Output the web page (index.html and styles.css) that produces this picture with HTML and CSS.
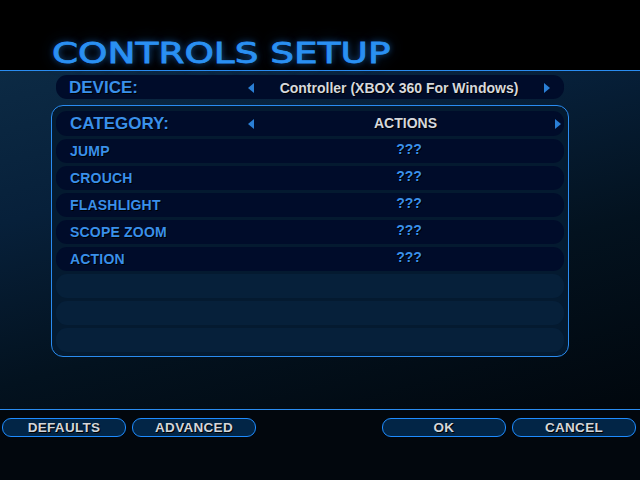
FILE: index.html
```html
<!DOCTYPE html>
<html>
<head>
<meta charset="utf-8">
<link rel="stylesheet" href="styles.css">
</head>
<body>
<div class="screen">
  <header class="header">
    <h1 class="title"><span class="title-text">CONTROLS SETUP</span></h1>
  </header>
  <main class="main">
    <div class="row row-device">
      <span class="label big">DEVICE:</span>
      <span class="arrow arrow-left"></span>
      <span class="value light">Controller (XBOX 360 For Windows)</span>
      <span class="arrow arrow-right"></span>
    </div>
    <section class="panel">
      <div class="row row-category">
        <span class="label big">CATEGORY:</span>
        <span class="arrow arrow-left"></span>
        <span class="value light">ACTIONS</span>
        <span class="arrow arrow-right"></span>
      </div>
      <div class="row item"><span class="label">JUMP</span><span class="value">???</span></div>
      <div class="row item"><span class="label">CROUCH</span><span class="value">???</span></div>
      <div class="row item"><span class="label">FLASHLIGHT</span><span class="value">???</span></div>
      <div class="row item"><span class="label">SCOPE ZOOM</span><span class="value">???</span></div>
      <div class="row item"><span class="label">ACTION</span><span class="value">???</span></div>
      <div class="row empty"></div>
      <div class="row empty"></div>
      <div class="row empty"></div>
    </section>
  </main>
  <footer class="footer">
    <div class="btn-group">
      <button class="btn">DEFAULTS</button>
      <button class="btn">ADVANCED</button>
    </div>
    <div class="btn-group">
      <button class="btn">OK</button>
      <button class="btn">CANCEL</button>
    </div>
  </footer>
</div>
</body>
</html>
```

FILE: styles.css
```css
html, body {
  margin: 0;
  padding: 0;
  background: #000;
}
.screen {
  width: 640px;
  height: 480px;
  display: flex;
  flex-direction: column;
  font-family: "Liberation Sans", Arial, sans-serif;
  overflow: hidden;
}
.header {
  background: #000;
  border-bottom: 1px solid #2a8cf0;
  box-sizing: border-box;
  height: 71px;
  display: flex;
  align-items: flex-end;
}
.title {
  margin: 0 0 2px 52px;
  font-family: "DejaVu Sans", sans-serif;
  font-weight: normal;
  font-size: 29px;
  line-height: 29px;
  color: #2a90f2;
  text-shadow: 0 0 6px rgba(40, 140, 255, 0.55), 0 0 14px rgba(40, 140, 255, 0.3);
}
.title-text {
  display: inline-block;
  transform: scaleX(1.29);
  transform-origin: left center;
  -webkit-text-stroke: 0.8px #2a90f2;
}
.main {
  flex: none;
  background: linear-gradient(165deg, #0c2a44 0%, #07203a 30%, #03121f 62%, #01070d 100%);
  border-bottom: 1px solid #2a8cf0;
  padding-top: 4px;
  box-sizing: border-box;
  height: 339px;
}
.row {
  display: flex;
  align-items: center;
  height: 24px;
  border-radius: 11px;
  background: #000c2a;
  box-sizing: border-box;
}
.row-device {
  margin-left: 56px;
  width: 508px;
  padding-left: 13px;
  padding-right: 14px;
  padding-top: 1px;
}
.label {
  width: 179px;
  flex: none;
  color: #3a90ea;
  font-weight: bold;
  font-size: 14px;
  letter-spacing: 0.2px;
  text-shadow: 1px 1px 0 #000;
}
.label.big {
  font-size: 17px;
  letter-spacing: 0;
}
.arrow {
  width: 0;
  height: 0;
  flex: none;
  border-top: 5px solid transparent;
  border-bottom: 5px solid transparent;
}
.arrow-left {
  border-right: 6px solid #2a7fd6;
}
.arrow-right {
  border-left: 6px solid #2a7fd6;
}
.value {
  flex: 1;
  text-align: center;
  color: #3a90ea;
  font-weight: bold;
  font-size: 14px;
  text-shadow: 1px 1px 0 #000;
}
.value.light {
  color: #d6d8dc;
  font-size: 14px;
}
.panel {
  margin: 6px 0 0 51px;
  width: 518px;
  height: 252px;
  box-sizing: border-box;
  border: 1px solid #2a8cf0;
  border-radius: 12px;
  background: #041a30;
  padding: 5px 4px 0 4px;
  display: flex;
  flex-direction: column;
  gap: 3px;
}
.row-category {
  height: 25px;
  padding-left: 14px;
  padding-right: 3px;
}
.row-category .label {
  width: 178px;
}
.row-category .value {
  padding-left: 2px;
  padding-bottom: 2px;
}
.item {
  padding-left: 14px;
}
.item .label {
  width: 184px;
}
.item .value {
  padding-bottom: 5px;
}
.empty {
  background: #06203a;
}
.footer {
  flex: 1;
  background: #02070d;
  display: flex;
  justify-content: space-between;
  padding: 8px 4px 0 2px;
  align-items: flex-start;
}
.btn-group {
  display: flex;
  gap: 6px;
}
.btn {
  width: 124px;
  height: 19px;
  box-sizing: border-box;
  margin: 0;
  padding: 0 0 1px 0;
  border: 1.5px solid #1e8cff;
  border-radius: 9px;
  background: #022546;
  color: #d4d6da;
  font-family: "Liberation Sans", Arial, sans-serif;
  font-weight: bold;
  font-size: 13.5px;
  line-height: 15px;
  letter-spacing: 0.3px;
  text-shadow: 1px 1px 0 #000;
}
```
